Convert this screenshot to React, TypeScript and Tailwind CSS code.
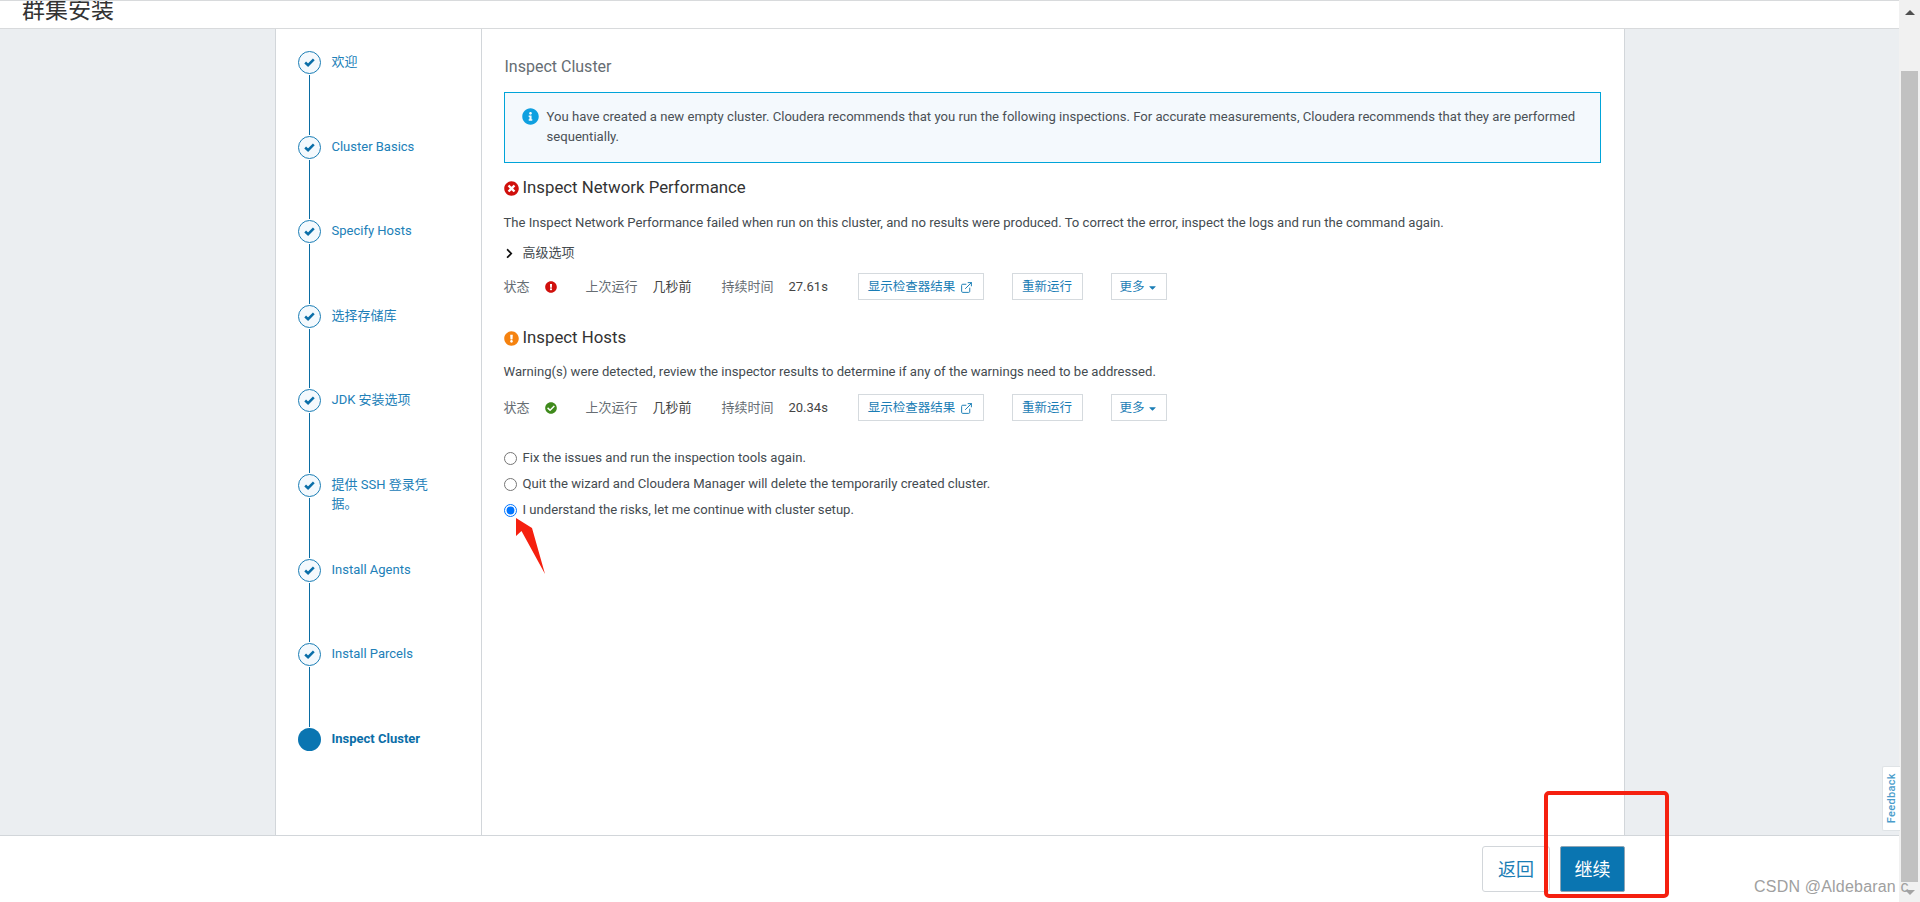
import React from 'react';
import { ExternalLink } from 'lucide-react';
import {
  FaCaretDown,
  FaCheckCircle,
  FaChevronRight,
  FaExclamationCircle,
  FaInfoCircle,
  FaTimesCircle,
} from 'react-icons/fa';

const steps = [
  '欢迎',
  'Cluster Basics',
  'Specify Hosts',
  '选择存储库',
  'JDK 安装选项',
  '提供 SSH 登录凭据。',
  'Install Agents',
  'Install Parcels',
  'Inspect Cluster',
];

const Step: React.FC<{ label: string; last: boolean }> = ({ label, last }) => (
  <li className="flex h-[84.6px] gap-[11px]">
    <div className="flex w-[23px] shrink-0 flex-col items-center">
      {last ? (
        <div className="h-[23px] w-[23px] shrink-0 rounded-full bg-[#0a75b1]" />
      ) : (
        <div className="flex h-[23px] w-[23px] shrink-0 items-center justify-center rounded-full border-[1.5px] border-[#1a7db5] bg-[#f4f9fd]">
          <svg viewBox="0 0 12 10" className="h-[9px] w-[11px]">
            <path d="M1.2 5 L4.4 8 L10.8 1.6" fill="none" stroke="#0a6ea8" strokeWidth="2.8" />
          </svg>
        </div>
      )}
      {!last && <div className="my-[1px] w-[1px] flex-1 bg-[#0a6ca3]" />}
    </div>
    <span
      className={`w-[105px] pt-[1px] text-[13px] leading-[19px] ${
        last ? 'font-bold text-[#0a6ea8]' : 'text-[#2180b8]'
      }`}
    >
      {label}
    </span>
  </li>
);

const LinkButton: React.FC<{ className: string; children: React.ReactNode }> = ({ className, children }) => (
  <button className={`flex h-[27px] items-center justify-center gap-[5px] border border-[#d5dade] bg-white pt-[2px] text-[12.5px] text-[#1a7db5] ${className}`}>
    {children}
  </button>
);

const StatusRow: React.FC<{ icon: React.ReactNode; duration: string }> = ({ icon, duration }) => (
  <div className="flex h-[27px] items-center text-[13px] text-[#666d73]">
    <span className="w-[41px]">状态</span>
    <span className="w-[41px]">{icon}</span>
    <span className="w-[67px]">上次运行</span>
    <span className="w-[69px] text-[#444]">几秒前</span>
    <span className="w-[67px]">持续时间</span>
    <span className="w-[69px] text-[#444]">{duration}</span>
    <LinkButton className="w-[126px]">
      显示检查器结果
      <ExternalLink size={13} strokeWidth={1.8} className="text-[#1a7db5]" />
    </LinkButton>
    <LinkButton className="ml-[28px] w-[71px]">重新运行</LinkButton>
    <LinkButton className="ml-[28px] w-[56px] !gap-[2px]">
      更多
      <FaCaretDown size={11} />
    </LinkButton>
  </div>
);

const Radio: React.FC<{ label: string; checked?: boolean }> = ({ label, checked }) => (
  <label className="flex h-[26px] items-center gap-[6px] text-[13.12px] text-[#444b50]">
    <input type="radio" name="next" defaultChecked={checked} className="m-0 h-[13px] w-[13px]" />
    {label}
  </label>
);

export default function App() {
  return (
    <div
      className="relative flex h-[902px] w-full overflow-hidden bg-white"
      style={{ fontFamily: 'Roboto, "Noto Sans CJK SC", sans-serif' }}
    >
      <div className="flex min-w-0 flex-1 flex-col">
        <header className="h-[29px] shrink-0 overflow-hidden border-y border-[#d8dadc] pl-[22px]">
          <h1 className="text-[23px] leading-[20px] text-[#333]">群集安装</h1>
        </header>

        <main className="flex min-h-0 flex-1 justify-center bg-[#ebeef1]">
          <div className="flex w-[1350px] border-x border-[#d2d6da] bg-white">
            <nav className="w-[206px] shrink-0 border-r border-[#d2d6da] pl-[22px] pt-[22px]">
              <ol>
                {steps.map((s, i) => (
                  <Step key={s} label={s} last={i === steps.length - 1} />
                ))}
              </ol>
            </nav>

            <section className="min-w-0 flex-1 pl-[22px] pr-[23px] pt-[28px]">
              <h2 className="pl-[1px] text-[16px] leading-[20px] text-[#666d73]">Inspect Cluster</h2>
              <div className="mt-[15px] flex h-[71px] gap-[8px] border border-[#00a4d9] bg-[#f4f9fd] pl-[17px] pr-[20px] pt-[14px] text-[13.12px] leading-[20px] text-[#4a5055]">
                <FaInfoCircle size={17} className="mt-[1px] shrink-0 text-[#0fa0e0]" />
                <p>
                  You have created a new empty cluster. Cloudera recommends that you run the following inspections. For accurate measurements, Cloudera recommends that they are performed sequentially.
                </p>
              </div>

              <h3 className="mt-[14px] flex h-[22px] items-center gap-[4px] text-[16.8px] text-[#333]">
                <FaTimesCircle size={15} className="text-[#d0100c]" />
                Inspect Network Performance
              </h3>
              <p className="mt-[14px] text-[13.12px] leading-[20px] text-[#444b50]">
                The Inspect Network Performance failed when run on this cluster, and no results were produced. To correct the error, inspect the logs and run the command again.
              </p>
              <div className="mt-[10px] flex h-[20px] items-center gap-[8px] text-[13px] text-[#444b50]">
                <FaChevronRight size={11} className="text-[#111]" />
                高级选项
              </div>
              <div className="mt-[10px]">
                <StatusRow icon={<FaExclamationCircle size={12} className="text-[#d0100c]" />} duration="27.61s" />
              </div>

              <h3 className="mt-[27px] flex h-[22px] items-center gap-[4px] text-[16.8px] text-[#333]">
                <FaExclamationCircle size={15} className="text-[#f5820f]" />
                Inspect Hosts
              </h3>
              <p className="mt-[13px] text-[13.12px] leading-[20px] text-[#444b50]">
                Warning(s) were detected, review the inspector results to determine if any of the warnings need to be addressed.
              </p>
              <div className="mt-[12px]">
                <StatusRow icon={<FaCheckCircle size={12} className="text-[#3f8a1c]" />} duration="20.34s" />
              </div>

              <div className="mt-[24px]">
                <Radio label="Fix the issues and run the inspection tools again." />
                <Radio label="Quit the wizard and Cloudera Manager will delete the temporarily created cluster." />
                <Radio label="I understand the risks, let me continue with cluster setup." checked />
              </div>
            </section>
          </div>
        </main>

        <footer className="flex h-[67px] shrink-0 items-start justify-end gap-[10px] border-t border-[#d2d6da] pr-[274px] pt-[10px]">
          <button className="h-[46px] w-[68px] rounded-[3px] border border-[#d2d6da] bg-white text-[18px] text-[#1a7db5]">返回</button>
          <button className="h-[46px] w-[65px] rounded-[2px] border border-[#8fa5b5] bg-[#0a75b1] text-[18px] text-white">继续</button>
        </footer>
      </div>

      <div className="flex w-[21px] shrink-0 flex-col bg-[#f1f1f1]">
        <div className="flex h-[71px] shrink-0 justify-center pt-[10px]">
          <div className="h-0 w-0 border-x-[5px] border-b-[5px] border-x-transparent border-b-[#505050]" />
        </div>
        <div className="mx-[2px] flex-1 bg-[#c1c1c1]" />
        <div className="flex h-[20px] shrink-0 justify-center pt-[8px]">
          <div className="h-0 w-0 border-x-[5px] border-t-[5px] border-x-transparent border-t-[#a3a3a3]" />
        </div>
      </div>

      {/* things lying over the page */}
      <div className="absolute left-[1882px] top-[766px] flex h-[65px] w-[18px] items-center justify-center rounded-l-[2px] border border-r-0 border-[#dfe3e6] bg-white">
        <span className="-rotate-90 whitespace-nowrap text-[11px] font-medium tracking-[0.3px] text-[#4a9ccb]">Feedback</span>
      </div>

      <div className="pointer-events-none absolute left-[1544px] top-[791px] h-[107px] w-[125px] rounded-[5px] border-[4px] border-[#f5200f]" />

      <svg className="pointer-events-none absolute left-[510px] top-[515px] h-[65px] w-[40px]" viewBox="0 0 40 65">
        <path d="M6 3 L6 21 L11.5 16 L35 59 L22 13 Z" fill="#f5200f" />
      </svg>

      <span className="pointer-events-none absolute left-[1754px] top-[875px] whitespace-nowrap text-[16px] tracking-[0.2px] text-[#a0a0a0]" style={{ fontFamily: '"Liberation Sans", sans-serif' }}>
        CSDN @Aldebaran c
      </span>
    </div>
  );
}
